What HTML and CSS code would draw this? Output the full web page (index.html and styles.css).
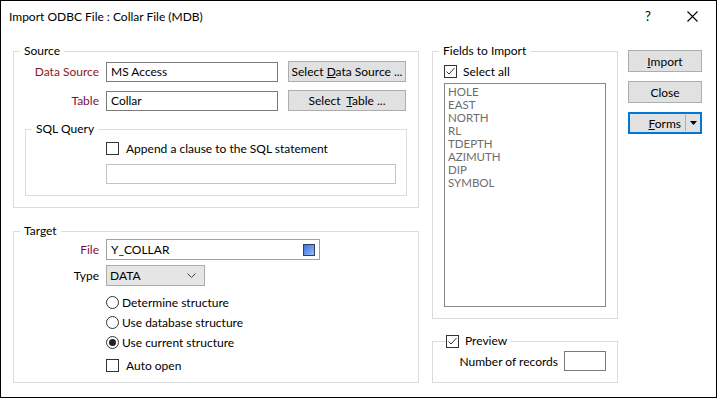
FILE: index.html
```html
<!DOCTYPE html>
<html lang="en">
<head>
    <meta charset="UTF-8">
    <title>Import ODBC File : Collar File (MDB)</title>
    <link rel="stylesheet" href="styles.css">
</head>
<body>
    <div class="window">
        <div class="titlebar">
            <span class="title">Import ODBC File : Collar File (MDB)</span>
            <span class="tb-help">?</span>
            <span class="tb-close">
                <svg width="11" height="11" viewBox="0 0 11 11"><path d="M0.5 0.5 L10.5 10.5 M10.5 0.5 L0.5 10.5" stroke="#000" stroke-width="1.1" fill="none"/></svg>
            </span>
        </div>

        <div class="content">
            <div class="col-left">
                <fieldset class="group source">
                    <legend>Source</legend>
                    <div class="row row-first">
                        <span class="lbl lbl-red">Data Source</span>
                        <div class="input input-src">MS Access</div>
                        <button class="btn btn-select">Select <u>D</u>ata Source ...</button>
                    </div>
                    <div class="row row-table">
                        <span class="lbl lbl-purple">Table</span>
                        <div class="input input-src">Collar</div>
                        <button class="btn btn-select">Select&nbsp; <u>T</u>able ...</button>
                    </div>

                    <fieldset class="group sql">
                        <legend>SQL Query</legend>
                        <div class="sql-body">
                            <div class="check-row sql-check">
                                <span class="checkbox"></span>
                                <span>Append a clause to the SQL statement</span>
                            </div>
                            <div class="input input-sql"></div>
                        </div>
                    </fieldset>
                </fieldset>

                <fieldset class="group target">
                    <legend>Target</legend>
                    <div class="row row-file">
                        <span class="lbl lbl-purple">File</span>
                        <div class="input input-file">
                            <span>Y_COLLAR</span>
                            <span class="file-icon"></span>
                        </div>
                    </div>
                    <div class="row row-type">
                        <span class="lbl">Type</span>
                        <div class="select">
                            <span>DATA</span>
                            <svg width="9" height="5" viewBox="0 0 9 5"><path d="M0.5 0.5 L4.5 4.5 L8.5 0.5" stroke="#444" fill="none"/></svg>
                        </div>
                    </div>
                    <div class="radios">
                        <div class="radio-row"><span class="radio"></span>Determine structure</div>
                        <div class="radio-row"><span class="radio"></span>Use database structure</div>
                        <div class="radio-row"><span class="radio radio-on"></span>Use current structure</div>
                    </div>
                    <div class="check-row auto-open">
                        <span class="checkbox"></span>
                        <span>Auto open</span>
                    </div>
                </fieldset>
            </div>

            <div class="col-mid">
                <fieldset class="group fields">
                    <legend>Fields to Import</legend>
                    <div class="check-row select-all">
                        <span class="checkbox checked">
                            <svg width="11" height="11" viewBox="0 0 11 11"><path d="M1.5 5.5 L4 8 L9.5 2" stroke="#333" stroke-width="1" fill="none"/></svg>
                        </span>
                        <span>Select all</span>
                    </div>
                    <div class="field-list">
                        <div>HOLE</div>
                        <div>EAST</div>
                        <div>NORTH</div>
                        <div>RL</div>
                        <div>TDEPTH</div>
                        <div>AZIMUTH</div>
                        <div>DIP</div>
                        <div>SYMBOL</div>
                    </div>
                </fieldset>

                <fieldset class="group preview">
                    <legend class="check-row">
                        <span class="checkbox checked">
                            <svg width="11" height="11" viewBox="0 0 11 11"><path d="M1.5 5.5 L4 8 L9.5 2" stroke="#333" stroke-width="1" fill="none"/></svg>
                        </span>
                        <span>Preview</span>
                    </legend>
                    <div class="records-row">
                        <span>Number of records</span>
                        <div class="input input-records"></div>
                    </div>
                </fieldset>
            </div>

            <div class="col-right">
                <button class="btn btn-side"><u>I</u>mport</button>
                <button class="btn btn-side">Close</button>
                <div class="btn btn-side btn-forms">
                    <span class="forms-text"><u>F</u>orms</span>
                    <span class="forms-arrow">
                        <svg width="7" height="4" viewBox="0 0 7 4"><path d="M0 0 L7 0 L3.5 4 Z" fill="#000"/></svg>
                    </span>
                </div>
            </div>
        </div>
    </div>
</body>
</html>
```

FILE: styles.css
```css
body {
    margin: 0;
    padding: 0;
    font-family: Lato, 'Liberation Sans', Arial, sans-serif;
    font-size: 12px;
    color: #000;
    background-color: #fff;
}
.window {
    width: 717px;
    height: 398px;
    box-sizing: border-box;
    border: 1px solid #000;
    background-color: #fff;
}
.titlebar {
    height: 30px;
    display: flex;
    align-items: center;
    padding-left: 8px;
}
.title {
    flex: 1;
}
.tb-help {
    width: 10px;
    margin-right: 32px;
    font-size: 13px;
}
.tb-close {
    display: flex;
    margin-right: 18px;
}
.content {
    display: flex;
    padding-left: 12px;
}
.col-left {
    width: 406px;
    padding-top: 13px;
}
.col-mid {
    width: 186px;
    margin-left: 13px;
    padding-top: 13px;
}
.col-right {
    width: 74px;
    margin-left: 10px;
    padding-top: 19px;
    display: flex;
    flex-direction: column;
    gap: 9px;
}
.group {
    margin: 0;
    border: 1px solid #dcdcdc;
    padding: 0 11px 11px 11px;
    min-width: 0;
}
.group legend {
    padding: 0 4px;
    margin-left: -5px;
    line-height: 14px;
}
.row {
    display: flex;
    align-items: center;
    height: 21px;
}
.row-first {
    margin-top: 3px;
}
.row-table {
    margin-top: 8px;
}
.lbl {
    width: 74px;
    text-align: right;
    margin-right: 7px;
    white-space: nowrap;
}
.lbl-red {
    color: #8b1a1a;
}
.lbl-purple {
    color: #7d1040;
}
.input {
    box-sizing: border-box;
    height: 20px;
    border: 1px solid #7a7a7a;
    background-color: #fff;
    padding: 0 4px;
    display: flex;
    align-items: center;
}
.input-src {
    width: 172px;
    margin-right: 10px;
}
.btn {
    box-sizing: border-box;
    height: 21px;
    border: 1px solid #adadad;
    background-color: #e1e1e1;
    font-family: inherit;
    font-size: 12px;
    color: #000;
    padding: 0;
    white-space: nowrap;
}
.btn-select {
    width: 118px;
}
.sql {
    margin-top: 11px;
    padding: 0 10px 11px 11px;
}
.sql-body {
    padding-left: 69px;
}
.check-row {
    display: flex;
    align-items: center;
    gap: 7px;
}
.checkbox {
    box-sizing: border-box;
    width: 13px;
    height: 13px;
    border: 1px solid #333;
    background-color: #fff;
    display: flex;
    align-items: center;
    justify-content: center;
    flex-shrink: 0;
}
.sql-check {
    height: 15px;
    margin-top: 5px;
}
.input-sql {
    margin-top: 8px;
    width: 290px;
    border-color: #c4c4c4;
}
.target {
    margin-top: 16px;
    padding-bottom: 7px;
}
.row-file {
    margin-top: 1px;
}
.input-file {
    width: 214px;
    height: 21px;
    border-color: #a0a0a0;
    justify-content: space-between;
    padding-right: 4px;
}
.file-icon {
    box-sizing: border-box;
    width: 12px;
    height: 12px;
    border: 1px solid #2e3f66;
    background: linear-gradient(135deg, #3d6fe0, #9bbcf5);
}
.row-type {
    margin-top: 5px;
}
.select {
    box-sizing: border-box;
    width: 99px;
    height: 21px;
    border: 1px solid #acacac;
    background-color: #e5e5e5;
    display: flex;
    align-items: center;
    justify-content: space-between;
    padding: 0 8px 0 3px;
}
.radios {
    margin-left: 81px;
    margin-top: 6px;
}
.radio-row {
    height: 20px;
    display: flex;
    align-items: center;
    gap: 3px;
}
.radio {
    box-sizing: border-box;
    width: 13px;
    height: 13px;
    border: 1px solid #333;
    border-radius: 50%;
    display: flex;
    align-items: center;
    justify-content: center;
}
.radio-on::after {
    content: "";
    width: 7px;
    height: 7px;
    border-radius: 50%;
    background-color: #222;
}
.auto-open {
    margin-left: 81px;
    margin-top: 3px;
    height: 20px;
}
.select-all {
    height: 15px;
    margin-top: 6px;
    gap: 6px;
}
.field-list {
    box-sizing: border-box;
    margin-top: 4px;
    width: 162px;
    height: 224px;
    border: 1px solid #828790;
    padding: 1px 3px;
    color: #6d6d6d;
    font-size: 11.5px;
    line-height: 13px;
}
.preview {
    margin-top: 15px;
}
.preview legend {
    margin-left: 2px;
    padding: 0 4px 0 0;
    gap: 6px;
}
.records-row {
    display: flex;
    align-items: center;
    justify-content: flex-end;
    gap: 6px;
    margin-top: 3px;
}
.input-records {
    width: 42px;
}
.btn-side {
    width: 74px;
    height: 22px;
}
.btn-forms {
    display: flex;
    align-items: center;
    border: 2px solid #0078d7;
}
.forms-text {
    flex: 1;
    text-align: right;
    padding-right: 4px;
}
.forms-arrow {
    display: flex;
    align-items: center;
    justify-content: center;
    width: 14px;
    height: 16px;
    border-left: 1px solid #adadad;
}
```
